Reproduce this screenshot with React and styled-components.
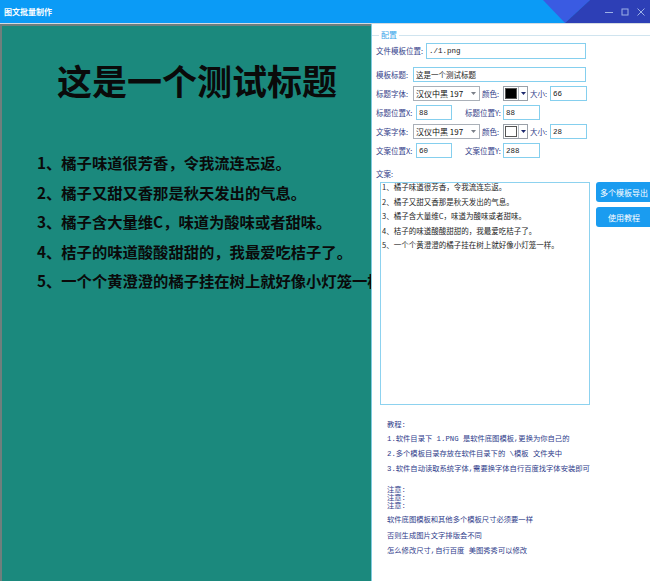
import React from "react";
import styled, { createGlobalStyle } from "styled-components";

const GlobalStyle = createGlobalStyle`
  html, body {
    margin: 0;
    padding: 0;
    background: #fff;
  }
  body {
    font-family: "Noto Sans CJK SC", "Noto Sans", sans-serif;
  }
`;

const Window = styled.div`
  width: 650px;
  height: 581px;
  display: flex;
  flex-direction: column;
  overflow: hidden;
  background: #fff;
`;

const TitleBar = styled.div`
  position: relative;
  height: 23px;
  flex-shrink: 0;
  display: flex;
  align-items: center;
  padding-left: 4px;
  background: #0b9bf6;
  border-bottom: 1px solid #d4dbe2;
`;

const AppTitle = styled.span`
  position: relative;
  color: #fff;
  font-size: 8px;
  font-weight: 700;
  line-height: 1;
`;

const Corner = styled.svg`
  position: absolute;
  top: 0;
  right: 0;
`;

const Controls = styled.div`
  position: relative;
  margin-left: auto;
  padding-right: 5px;
  display: flex;
  align-items: center;
  gap: 8px;
`;

const Main = styled.div`
  flex: 1;
  display: flex;
  min-height: 0;
`;

const Canvas = styled.div`
  width: 369px;
  flex-shrink: 0;
  background: #1b897d;
  border-left: 2px solid #6f7f7d;
  border-top: 2px solid #6f7f7d;
  overflow: hidden;
  color: #0a0a0a;
  white-space: nowrap;
`;

const CanvasTitle = styled.div`
  margin: 34px 0 0 55px;
  font-size: 35px;
  line-height: 40px;
  font-weight: 600;
`;

const CanvasList = styled.div`
  margin-top: 48px;
  padding-left: 35px;
  font-size: 15.3px;
  line-height: 29.5px;
  font-weight: 700;
`;

const Panel = styled.div`
  flex: 1;
  display: flex;
  flex-direction: column;
  padding: 7px 0 0 4px;
  border-left: 1px solid #7fcbe0;
  font-size: 7.5px;
  color: #34418a;
`;

const GroupHead = styled.div`
  height: 8px;
  margin-left: -4px;
  display: flex;
  align-items: center;
`;

const GroupLine = styled.span`
  height: 1px;
  background: #d0e4ef;
  width: ${(p) => (p.$w ? `${p.$w}px` : "auto")};
  flex: ${(p) => (p.$w ? "none" : 1)};
`;

const Legend = styled.span`
  padding: 0 2px;
  color: #3aa6ea;
  font-size: 8px;
  line-height: 8px;
`;

const Row = styled.div`
  display: flex;
  align-items: center;
  height: ${(p) => p.$h || 15}px;
  margin-top: ${(p) => p.$mt || 4}px;
`;

const Label = styled.span`
  width: ${(p) => p.$w}px;
  margin-left: ${(p) => p.$ml || 0}px;
  flex-shrink: 0;
  white-space: nowrap;
  line-height: 1;
`;

const Field = styled.input`
  box-sizing: border-box;
  width: ${(p) => p.$w}px;
  height: 100%;
  margin: 0;
  padding: 0 2px;
  border: 1px solid #85cfee;
  outline: none;
  background: #fff;
  color: #222;
  font-family: "Liberation Mono", "Noto Sans CJK SC", monospace;
  font-size: 7.5px;
`;

const Select = styled.div`
  box-sizing: border-box;
  width: ${(p) => p.$w}px;
  height: 100%;
  display: flex;
  align-items: center;
  justify-content: space-between;
  padding: 0 3px 0 2px;
  border: 1px solid #aab0b8;
  background: #fff;
  color: #111;
  font-size: 8px;
  white-space: nowrap;
`;

const Picker = styled.div`
  box-sizing: border-box;
  width: 25px;
  height: 100%;
  display: flex;
  border: 1px solid #9aa0a8;
  background: #fff;
`;

const Swatch = styled.span`
  flex: 1;
  margin: 1px;
  background: ${(p) => p.$color};
  border: 1px solid #555;
`;

const DropBtn = styled.span`
  width: 8px;
  display: flex;
  align-items: center;
  justify-content: center;
  border-left: 1px solid #b8bec6;
`;

const EditorRow = styled.div`
  display: flex;
  align-items: flex-start;
  margin: 3px 0 0 4px;
`;

const TextBox = styled.div`
  box-sizing: border-box;
  width: 210px;
  height: 223px;
  padding: 0 1px;
  border: 1px solid #8dd2ef;
  color: #262626;
  font-size: 7.5px;
  line-height: 14.6px;
  white-space: nowrap;
  overflow: hidden;
`;

const TextLines = styled.div`
  margin-top: -3px;
`;

const ButtonCol = styled.div`
  display: flex;
  flex-direction: column;
  gap: 5px;
  margin-left: 6px;
`;

const Button = styled.button`
  width: 56px;
  height: 20px;
  padding: 0;
  border: none;
  border-radius: 3px;
  background: #1a9cf0;
  color: #fff;
  font-family: inherit;
  font-size: 8px;
  white-space: nowrap;
`;

const Guide = styled.div`
  padding-left: 11px;
  margin-top: ${(p) => p.$mt}px;
  line-height: ${(p) => p.$lh}px;
  font-family: "Liberation Mono", "Noto Sans CJK SC", monospace;
  font-size: 7.3px;
  color: #2e3b8a;
  white-space: nowrap;
`;

const Arrow = ({ color = "#7a7f88" }) => (
  <svg width="5" height="3" viewBox="0 0 5 3">
    <polygon points="0,0 5,0 2.5,3" fill={color} />
  </svg>
);

const canvasLines = [
  "1、橘子味道很芳香，令我流连忘返。",
  "2、橘子又甜又香那是秋天发出的气息。",
  "3、橘子含大量维C，味道为酸味或者甜味。",
  "4、桔子的味道酸酸甜甜的，我最爱吃桔子了。",
  "5、一个个黄澄澄的橘子挂在树上就好像小灯笼一样。",
];

const FontRow = ({ label, color, size }) => (
  <Row>
    <Label $w={37}>{label}</Label>
    <Select $w={67}>
      <span>汉仪中黑 197</span>
      <Arrow />
    </Select>
    <Label $w={21} $ml={2}>颜色:</Label>
    <Picker>
      <Swatch $color={color} />
      <DropBtn>
        <Arrow color="#1e2a6e" />
      </DropBtn>
    </Picker>
    <Label $w={20} $ml={2}>大小:</Label>
    <Field $w={37} readOnly value={size} />
  </Row>
);

const PosRow = ({ prefix, x, y }) => (
  <Row>
    <Label $w={40}>{prefix}位置X:</Label>
    <Field $w={36} readOnly value={x} />
    <Label $w={38} $ml={13}>{prefix}位置Y:</Label>
    <Field $w={37} readOnly value={y} />
  </Row>
);

const App = () => {
  return (
    <>
      <GlobalStyle />
      <Window>
        <TitleBar>
          <Corner width="107" height="23" viewBox="0 0 107 23">
            <polygon points="0,0 47,0 22,23" fill="#3a5be2" />
            <polygon points="47,0 107,0 107,23 22,23" fill="#2d3fb6" />
          </Corner>
          <AppTitle>图文批量制作</AppTitle>
          <Controls>
            <svg width="8" height="8" viewBox="0 0 8 8">
              <line x1="0" y1="4.5" x2="8" y2="4.5" stroke="#9db1e6" strokeWidth="1" />
            </svg>
            <svg width="8" height="8" viewBox="0 0 8 8">
              <rect x="1" y="1" width="6" height="6" fill="none" stroke="#9db1e6" strokeWidth="1" />
            </svg>
            <svg width="8" height="8" viewBox="0 0 8 8">
              <path d="M0.5 0.5 L7.5 7.5 M7.5 0.5 L0.5 7.5" stroke="#9db1e6" strokeWidth="1" />
            </svg>
          </Controls>
        </TitleBar>
        <Main>
          <Canvas>
            <CanvasTitle>这是一个测试标题</CanvasTitle>
            <CanvasList>
              {canvasLines.map((line) => (
                <div key={line}>{line}</div>
              ))}
            </CanvasList>
          </Canvas>
          <Panel>
            <GroupHead>
              <GroupLine $w={7} />
              <Legend>配置</Legend>
              <GroupLine />
            </GroupHead>
            <Row $h={16}>
              <Label $w={50}>文件模板位置:</Label>
              <Field $w={160} readOnly value="./1.png" />
            </Row>
            <Row $mt={8}>
              <Label $w={37}>模板标题:</Label>
              <Field $w={173} readOnly value="这是一个测试标题" />
            </Row>
            <FontRow label="标题字体:" color="#000" size="66" />
            <PosRow prefix="标题" x="88" y="88" />
            <FontRow label="文案字体:" color="#fff" size="28" />
            <PosRow prefix="文案" x="60" y="288" />
            <Row $mt={11} $h={10}>
              <Label $w={30}>文案:</Label>
            </Row>
            <EditorRow>
              <TextBox>
                <TextLines>
                  {canvasLines.map((line) => (
                    <div key={line}>{line}</div>
                  ))}
                </TextLines>
              </TextBox>
              <ButtonCol>
                <Button>多个模板导出</Button>
                <Button>使用教程</Button>
              </ButtonCol>
            </EditorRow>
            <Guide $mt={12.5} $lh={14.7}>
              <div>教程:</div>
              <div>1.软件目录下 1.PNG 是软件底图模板,更换为你自己的</div>
              <div>2.多个模板目录存放在软件目录下的 \模板 文件夹中</div>
              <div>3.软件自动读取系统字体,需要换字体自行百度找字体安装即可</div>
            </Guide>
            <Guide $mt={9.6} $lh={8}>
              <div>注意:</div>
              <div>注意:</div>
              <div>注意:</div>
            </Guide>
            <Guide $mt={3.5} $lh={15.3}>
              <div>软件底图模板和其他多个模板尺寸必须要一样</div>
              <div>否则生成图片文字排版会不同</div>
              <div>怎么修改尺寸,自行百度 美图秀秀可以修改</div>
            </Guide>
          </Panel>
        </Main>
      </Window>
    </>
  );
};

export default App;
